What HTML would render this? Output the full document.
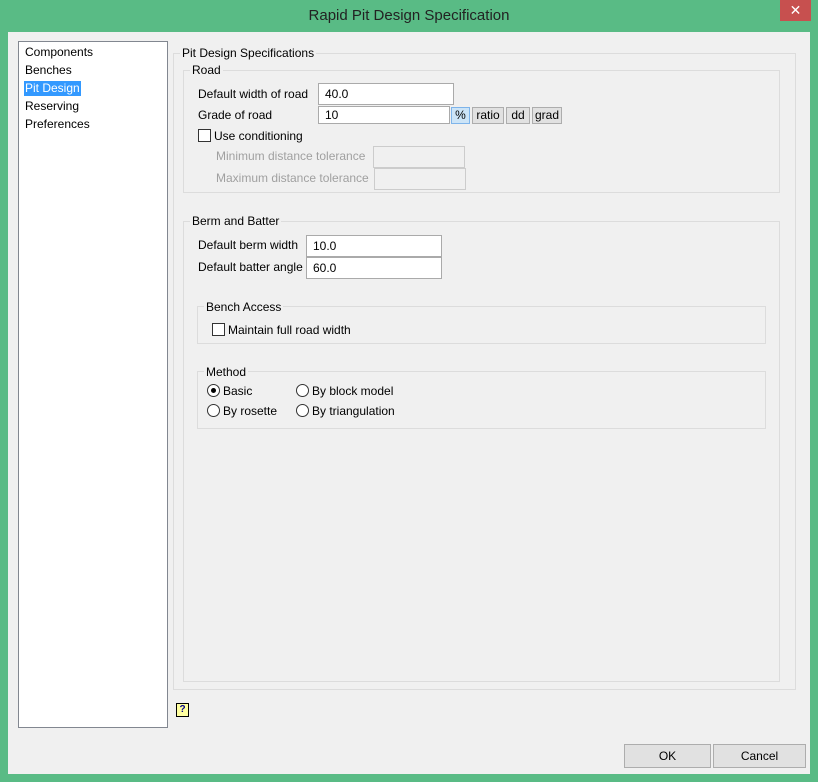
<!DOCTYPE html>
<html><head><style>
*{box-sizing:border-box;margin:0;padding:0}
body{width:818px;height:782px;background:#59bb85;font-family:"Liberation Sans",sans-serif;font-size:12px;color:#000;position:relative;overflow:hidden}
.a{position:absolute}
.title{left:0;top:0;width:818px;height:32px;text-align:center;line-height:32px;font-size:15px;color:#222}
.close{left:780px;top:0;width:31px;height:21px;background:#c7504f;color:#fff;text-align:center;line-height:20px;font-size:14px}
.client{left:8px;top:32px;width:802px;height:742px;background:#f0f0f0}
.list{left:18px;top:41px;width:150px;height:687px;background:#fff;border:1px solid #828790}
.list div{position:absolute;left:6px;line-height:15px}
.grp{border:1px solid #dcdcdc}
.lbl{background:#f0f0f0;padding:0 2px;line-height:14px}
.inp{background:#fff;border:1px solid #aaa;padding-left:6px;line-height:21px}
.dis{background:#f0f0f0;border:1px solid #ccc}
.btn{background:#e1e1e1;border:1px solid #adadad;text-align:center;line-height:15px}
.cb{width:13px;height:13px;border:1px solid #333;background:#fff}
.rd{width:13px;height:13px;border:1px solid #333;border-radius:50%;background:#fff}
.gray{color:#a0a0a0}
</style></head><body>
<div class="a title">Rapid Pit Design Specification</div>
<div class="a close">✕</div>
<div class="a client"></div>
<div class="a list">
<div style="top:3px">Components</div>
<div style="top:21px">Benches</div>
<div style="top:39px;left:5px;background:#3399ff;color:#fff;padding:0 1px">Pit Design</div>
<div style="top:57px">Reserving</div>
<div style="top:75px">Preferences</div>
</div>
<div class="a grp" style="left:173px;top:53px;width:623px;height:637px"></div>
<div class="a lbl" style="left:180px;top:46px">Pit Design Specifications</div>
<div class="a grp" style="left:183px;top:70px;width:597px;height:123px"></div>
<div class="a lbl" style="left:190px;top:63px">Road</div>
<div class="a" style="left:198px;top:87px">Default width of road</div>
<div class="a inp" style="left:318px;top:83px;width:136px;height:22px">40.0</div>
<div class="a" style="left:198px;top:108px">Grade of road</div>
<div class="a inp" style="left:318px;top:106px;width:132px;height:18px;line-height:17px">10</div>
<div class="a btn" style="left:451px;top:107px;width:19px;height:17px;background:#cce4f7;border-color:#7eb4ea">%</div>
<div class="a btn" style="left:472px;top:107px;width:32px;height:17px">ratio</div>
<div class="a btn" style="left:506px;top:107px;width:24px;height:17px">dd</div>
<div class="a btn" style="left:532px;top:107px;width:30px;height:17px">grad</div>
<div class="a cb" style="left:198px;top:129px"></div>
<div class="a" style="left:214px;top:129px">Use conditioning</div>
<div class="a gray" style="left:216px;top:149px">Minimum distance tolerance</div>
<div class="a dis" style="left:373px;top:146px;width:92px;height:22px"></div>
<div class="a gray" style="left:216px;top:171px">Maximum distance tolerance</div>
<div class="a dis" style="left:374px;top:168px;width:92px;height:22px"></div>
<div class="a grp" style="left:183px;top:221px;width:597px;height:461px"></div>
<div class="a lbl" style="left:190px;top:214px">Berm and Batter</div>
<div class="a" style="left:198px;top:238px">Default berm width</div>
<div class="a inp" style="left:306px;top:235px;width:136px;height:22px">10.0</div>
<div class="a" style="left:198px;top:260px">Default batter angle</div>
<div class="a inp" style="left:306px;top:257px;width:136px;height:22px">60.0</div>
<div class="a grp" style="left:197px;top:306px;width:569px;height:38px"></div>
<div class="a lbl" style="left:204px;top:300px">Bench Access</div>
<div class="a cb" style="left:212px;top:323px"></div>
<div class="a" style="left:228px;top:323px">Maintain full road width</div>
<div class="a grp" style="left:197px;top:371px;width:569px;height:58px"></div>
<div class="a lbl" style="left:204px;top:365px">Method</div>
<div class="a rd" style="left:207px;top:384px"><div style="position:absolute;left:3px;top:3px;width:5px;height:5px;border-radius:50%;background:#000"></div></div>
<div class="a" style="left:223px;top:384px">Basic</div>
<div class="a rd" style="left:296px;top:384px"></div>
<div class="a" style="left:312px;top:384px">By block model</div>
<div class="a rd" style="left:207px;top:404px"></div>
<div class="a" style="left:223px;top:404px">By rosette</div>
<div class="a rd" style="left:296px;top:404px"></div>
<div class="a" style="left:312px;top:404px">By triangulation</div>
<div class="a" style="left:176px;top:703px;width:13px;height:14px;background:#ffffa0;border:1px solid #000;font-size:10px;font-weight:bold;color:#00008b;text-align:center;line-height:12px">?</div>
<div class="a btn" style="left:624px;top:744px;width:87px;height:24px;line-height:22px">OK</div>
<div class="a btn" style="left:713px;top:744px;width:93px;height:24px;line-height:22px">Cancel</div>
</body></html>
